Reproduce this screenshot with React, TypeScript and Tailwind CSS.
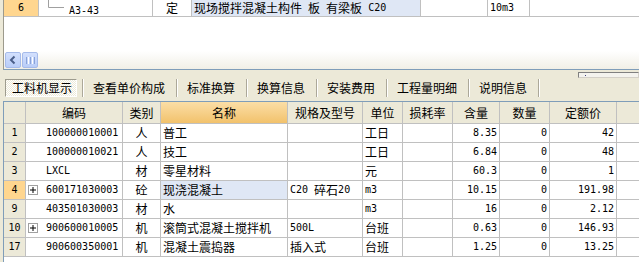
import React from 'react';

function Tx({ s }: { s: string }) {
  const parts = s.split(/([\x20-\x7E]+)/).filter((p) => p.length);
  return (
    <>
      {parts.map((p, i) =>
        /^[\x20-\x7E]+$/.test(p) ? (
          <span key={i} className="font-['DejaVu_Sans_Mono',monospace] text-[10px] whitespace-pre">
            {p}
          </span>
        ) : (
          <span key={i}>{p}</span>
        )
      )}
    </>
  );
}

type Row = {
  n: string;
  plus?: boolean;
  code: string;
  cat: string;
  name: string;
  spec: string;
  unit: string;
  qty: string;
  num: string;
  price: string;
  sel?: boolean;
};

const rows: Row[] = [
  { n: '1', code: '100000010001', cat: '人', name: '普工', spec: '', unit: '工日', qty: '8.35', num: '0', price: '42' },
  { n: '2', code: '100000010021', cat: '人', name: '技工', spec: '', unit: '工日', qty: '6.84', num: '0', price: '48' },
  { n: '3', code: 'LXCL', cat: '材', name: '零星材料', spec: '', unit: '元', qty: '60.3', num: '0', price: '1' },
  { n: '4', plus: true, sel: true, code: '600171030003', cat: '砼', name: '现浇混凝土', spec: 'C20 碎石20', unit: 'm3', qty: '10.15', num: '0', price: '191.98' },
  { n: '9', code: '403501030003', cat: '材', name: '水', spec: '', unit: 'm3', qty: '16', num: '0', price: '2.12' },
  { n: '10', plus: true, code: '900600010005', cat: '机', name: '滚筒式混凝土搅拌机', spec: '500L', unit: '台班', qty: '0.63', num: '0', price: '146.93' },
  { n: '17', code: '900600350001', cat: '机', name: '混凝土震捣器', spec: '插入式', unit: '台班', qty: '1.25', num: '0', price: '13.25' },
];

const tabs = ['查看单价构成', '标准换算', '换算信息', '安装费用', '工程量明细', '说明信息'];

function Sep() {
  return <div className="h-[18px] w-[2px] shrink-0 border-l border-r border-l-[#aca899] border-r-white" />;
}

export default function App() {
  const cell = 'shrink-0 h-full border-r border-[#c0c0c0] flex items-center';
  return (
    <div className="w-[639px] h-[262px] overflow-hidden bg-[#ece9d8] font-['Noto_Sans_CJK_SC',sans-serif] text-[12px] leading-[14px] text-black flex flex-col">
      {/* top pane */}
      <div className="ml-[3px] h-[70px] shrink-0 border-l border-b border-l-[#9c9a8c] border-b-[#7f9db9] bg-white flex flex-col">
        <div className="flex h-[17px] border-b border-[#c0c0c0] shrink-0">
          <div className={`${cell} w-[35px] justify-center bg-[#ffd68f]`}>
            <Tx s="6" />
          </div>
          <div className={`${cell} w-[114px] items-start`}>
            <svg width="16" height="16" className="ml-[9px] shrink-0">
              <path d="M0.5 0 V7.5 H16" stroke="#a0a0a0" fill="none" />
            </svg>
            <div className="ml-[5px] pt-[2px]">
              <Tx s="A3-43" />
            </div>
          </div>
          <div className={`${cell} w-[39px] justify-center`}>定</div>
          <div className={`${cell} w-[229px] pl-[2px] bg-[#dfe7f5]`}>
            <Tx s="现场搅拌混凝土构件 板 有梁板 C20" />
          </div>
          <div className={`${cell} w-[67px]`} />
          <div className={`${cell} w-[42px] pl-[2px]`}>
            <Tx s="10m3" />
          </div>
          <div className="flex-1" />
        </div>
        <div className="flex-1" />
        <div className="h-[18px] shrink-0 bg-gradient-to-b from-white to-[#f1efe6] flex items-start pt-[1px] pl-[1px] gap-[1px]">
          <div className="w-[16px] h-[16px] rounded-[2px] border border-[#a6bbea] bg-gradient-to-b from-[#d3e0fd] to-[#b9cdf8] flex items-center justify-center">
            <svg width="10" height="10" viewBox="0 0 10 10">
              <path d="M6.5 1.5 L3 5 L6.5 8.5" stroke="#4b5f8a" strokeWidth="2" fill="none" />
            </svg>
          </div>
          <div className="w-[16px] h-[16px] rounded-[2px] border border-[#a6bbea] bg-gradient-to-b from-[#d3e0fd] to-[#b9cdf8] flex items-center justify-center gap-[1px]">
            <div className="w-[1px] h-[7px] bg-[#8aa3d8]" />
            <div className="w-[1px] h-[7px] bg-white" />
            <div className="w-[1px] h-[7px] bg-[#8aa3d8]" />
            <div className="w-[1px] h-[7px] bg-white" />
            <div className="w-[1px] h-[7px] bg-[#8aa3d8]" />
          </div>
        </div>
      </div>

      {/* tab bar */}
      <div className="h-[31px] shrink-0 flex items-start pt-[2px]">
        <div className="mt-[7px] ml-[5px] flex items-center">
          <div className="w-[72px] h-[18px] border border-t-[#9d9b8e] border-l-[#9d9b8e] border-b-white border-r-white bg-[image:repeating-conic-gradient(#ffffff_0%_25%,#ece9d8_0%_50%)] bg-[length:2px_2px] pl-[6px] flex items-center">
            工料机显示
          </div>
          <div className="ml-[5px]">
            <Sep />
          </div>
          {tabs.map((t) => (
            <div key={t} className="flex items-center">
              <div className="pl-[9px] pr-[11px] h-[18px] flex items-center">{t}</div>
              <Sep />
            </div>
          ))}
        </div>
        <div className="ml-auto mt-[0px] w-[61px] h-[6px] border border-t-[#808080] border-l-[#808080] border-b-[#d4d0c8] border-r-[#d4d0c8] bg-[#f4f3ee] flex items-center">
          <div className="ml-[6px] w-[1px] h-[1px] bg-[#404080]" />
        </div>
      </div>

      {/* grid */}
      <div className="ml-[3px] flex-1 border-l border-t border-[#7f9db9] bg-white flex flex-col">
        <div className="flex h-[22px] border-b border-[#c0c0c0] bg-[#ece9d8] shrink-0">
          <div className={`${cell} w-[22px]`} />
          <div className={`${cell} w-[97px] justify-center`}>编码</div>
          <div className={`${cell} w-[38px] justify-center`}>类别</div>
          <div className={`${cell} w-[127px] justify-center bg-gradient-to-b from-[#fbdea6] to-[#f2c26b]`}>名称</div>
          <div className={`${cell} w-[75px] justify-center`}>规格及型号</div>
          <div className={`${cell} w-[40px] justify-center`}>单位</div>
          <div className={`${cell} w-[50px] justify-center`}>损耗率</div>
          <div className={`${cell} w-[47px] justify-center`}>含量</div>
          <div className={`${cell} w-[50px] justify-center`}>数量</div>
          <div className={`${cell} w-[67px] justify-center`}>定额价</div>
          <div className="flex-1" />
        </div>
        {rows.map((r) => (
          <div key={r.n} className="flex h-[19px] border-b border-[#c0c0c0] shrink-0">
            <div className={`${cell} w-[22px] justify-center ${r.sel ? 'bg-[#ffd68f]' : 'bg-[#ece9d8]'}`}>
              <Tx s={r.n} />
            </div>
            <div className={`${cell} w-[97px]`}>
              <div className="w-[20px] pl-[2px] shrink-0 flex items-center">
                {r.plus && (
                  <div className="w-[10px] h-[10px] border border-[#a0a0a0] bg-white flex items-center justify-center">
                    <svg width="8" height="8" viewBox="0 0 8 8">
                      <path d="M1 4 H7 M4 1 V7" stroke="#000" strokeWidth="1" />
                    </svg>
                  </div>
                )}
              </div>
              <Tx s={r.code} />
            </div>
            <div className={`${cell} w-[38px] justify-center`}>{r.cat}</div>
            <div className={`${cell} w-[127px] pl-[2px] ${r.sel ? 'bg-[#dfe7f5]' : ''}`}>
              <Tx s={r.name} />
            </div>
            <div className={`${cell} w-[75px] pl-[2px]`}>
              <Tx s={r.spec} />
            </div>
            <div className={`${cell} w-[40px] pl-[2px]`}>
              <Tx s={r.unit} />
            </div>
            <div className={`${cell} w-[50px]`} />
            <div className={`${cell} w-[47px] justify-end pr-[2px]`}>
              <Tx s={r.qty} />
            </div>
            <div className={`${cell} w-[50px] justify-end pr-[2px]`}>
              <Tx s={r.num} />
            </div>
            <div className={`${cell} w-[67px] justify-end pr-[2px]`}>
              <Tx s={r.price} />
            </div>
            <div className="flex-1" />
          </div>
        ))}
      </div>
    </div>
  );
}
